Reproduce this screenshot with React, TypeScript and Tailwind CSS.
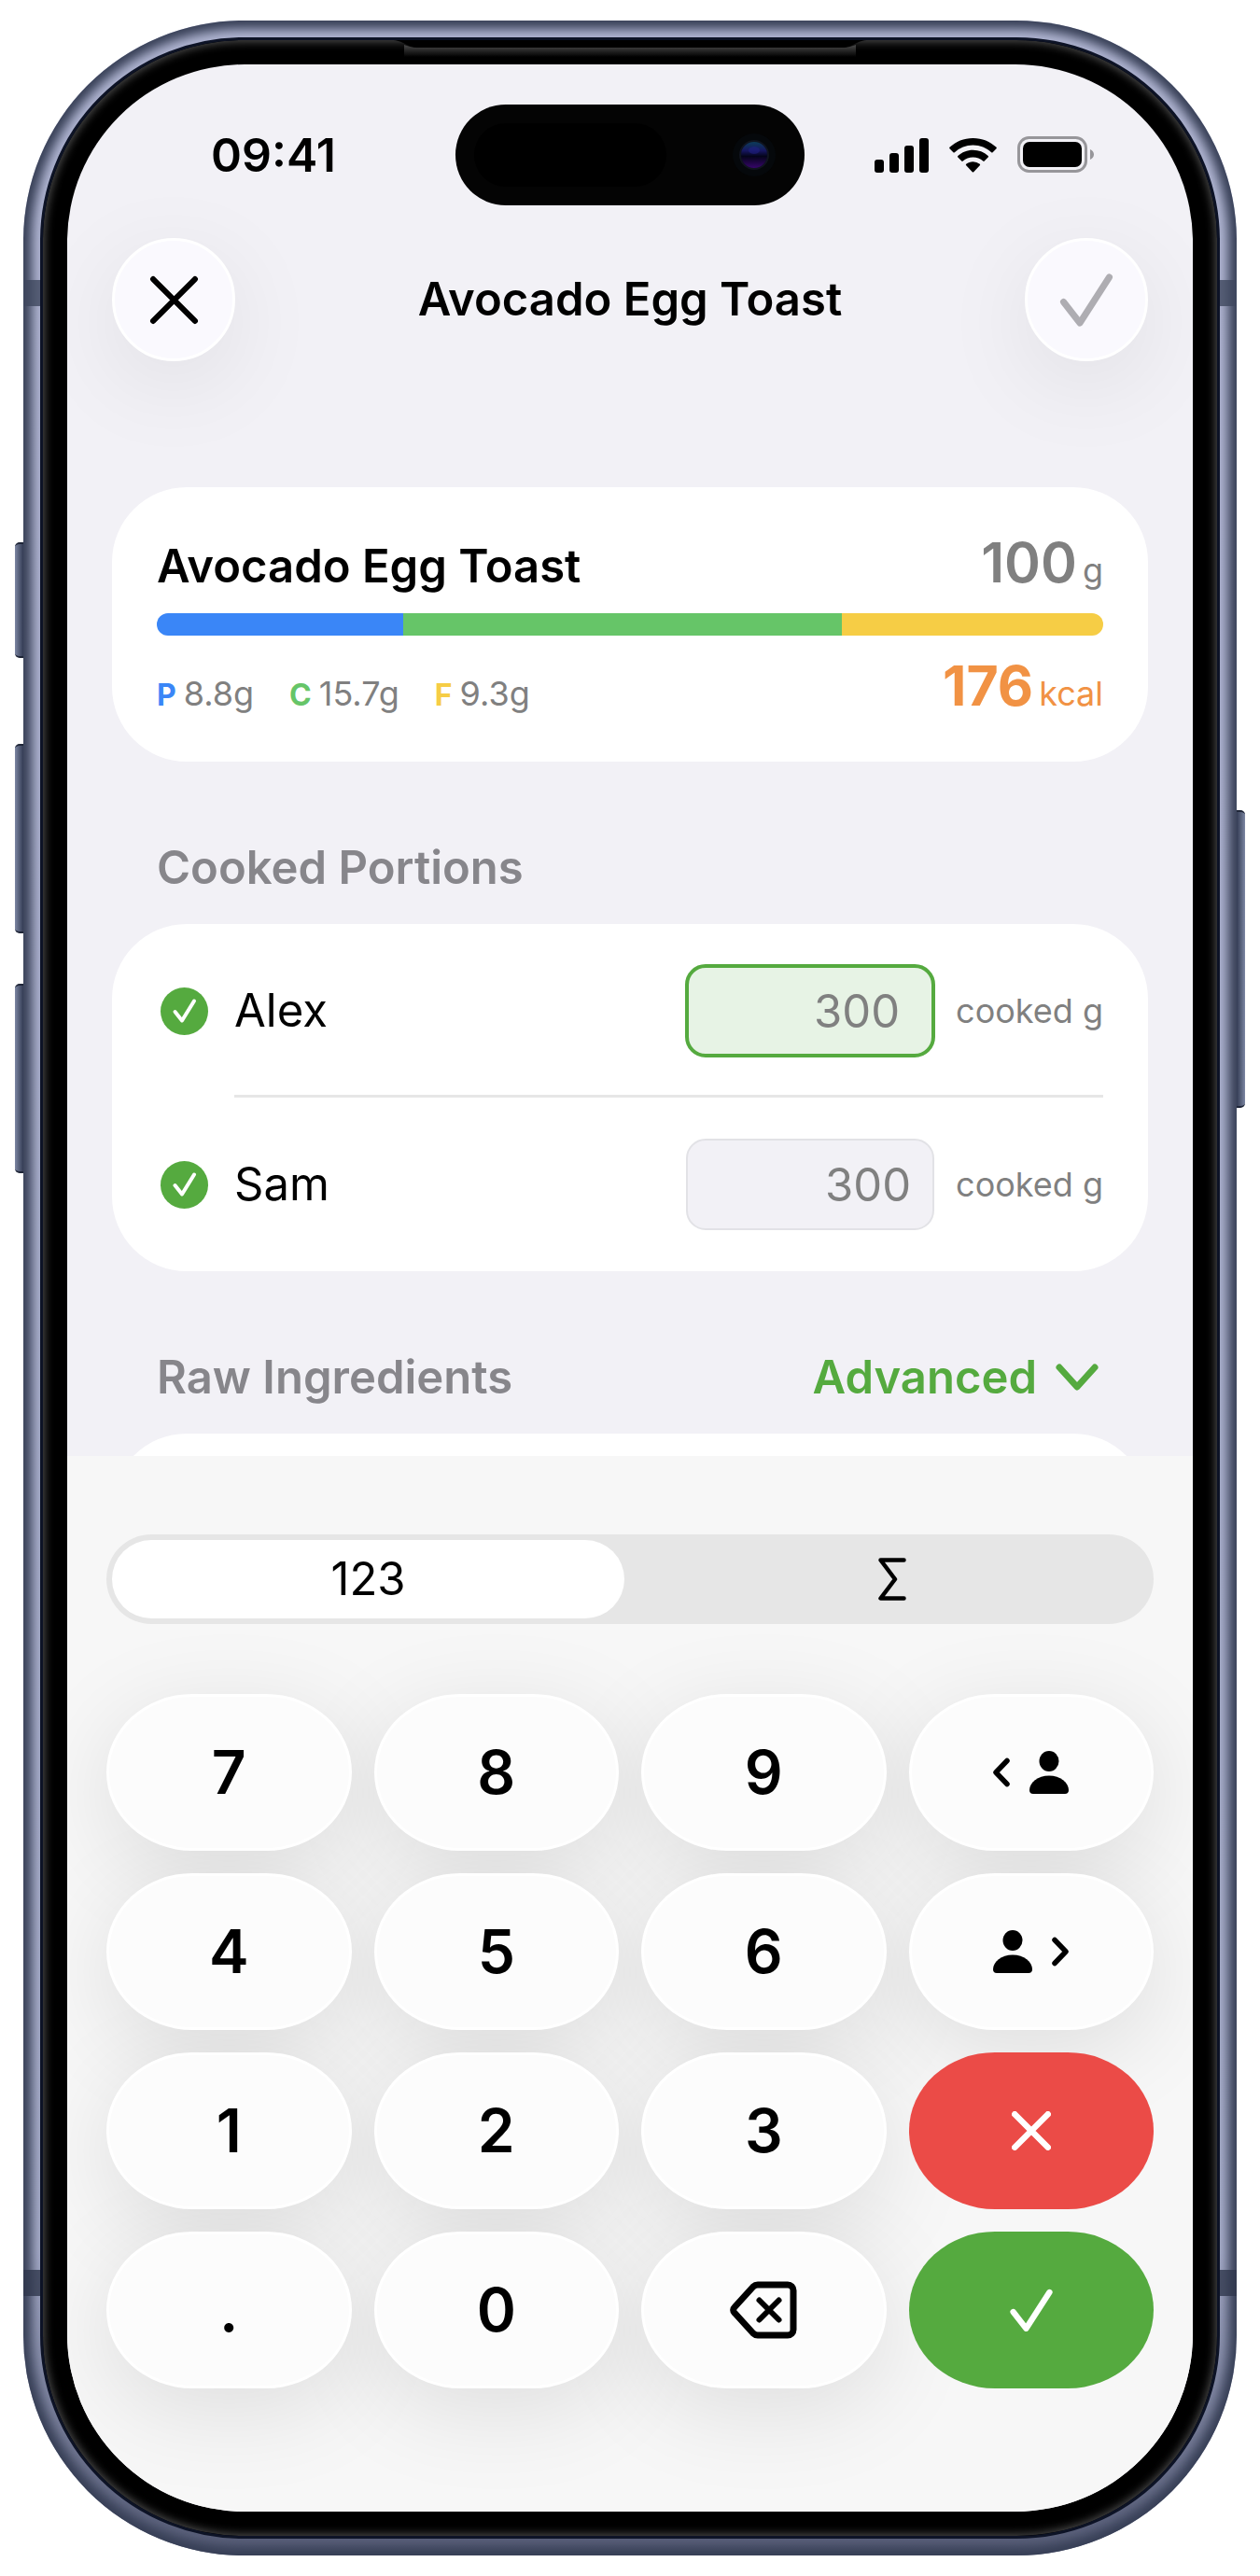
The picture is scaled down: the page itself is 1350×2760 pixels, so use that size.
import { useState, type ReactNode } from 'react';

// Types
interface Macro {
  letter: string;
  grams: string;
  share: number;
  text: string;
  bar: string;
}

interface Portion {
  name: string;
  grams: string;
  active: boolean;
}

const MACROS: Macro[] = [
  { letter: 'P', grams: '8.8g', share: 264, text: 'text-[#3a86f7]', bar: 'bg-[#3a86f7]' },
  { letter: 'C', grams: '15.7g', share: 470, text: 'text-[#66c568]', bar: 'bg-[#66c568]' },
  { letter: 'F', grams: '9.3g', share: 280, text: 'text-[#f6cd45]', bar: 'bg-[#f6cd45]' },
];

const PORTIONS: Portion[] = [
  { name: 'Alex', grams: '300', active: true },
  { name: 'Sam', grams: '300', active: false },
];

// Icons
const StatusIcons = () => (
  <div className="flex items-center gap-[22px] pr-[6px]">
    <svg width="58" height="38" viewBox="0 0 58 38">
      <rect x="0" y="24" width="10" height="14" rx="3" />
      <rect x="16" y="17" width="10" height="21" rx="3" />
      <rect x="32" y="9" width="10" height="29" rx="3" />
      <rect x="48" y="1" width="10" height="37" rx="3" />
    </svg>
    <svg width="51" height="38" viewBox="0 0 51 38">
      <path d="M25.5 1C15.8 1 7 4.700 .5 10.800a1 1 0 0 0 0 1.400l3.900 4a1 1 0 0 0 1.400 0A28.600 28.600 0 0 1 25.500 8.400c7.600 0 14.500 2.900 19.700 7.800a1 1 0 0 0 1.400 0l3.900-4a1 1 0 0 0 0-1.400C44 4.700 35.200 1 25.500 1Z" />
      <path d="M25.5 13.800c-6.200 0-11.900 2.400-16.200 6.300a1 1 0 0 0 0 1.500l4 4a1 1 0 0 0 1.400 0 16 16 0 0 1 21.600 0 1 1 0 0 0 1.400 0l4-4a1 1 0 0 0 0-1.500 24 24 0 0 0-16.200-6.300Z" />
      <path d="M25.5 26.200c-2.800 0-5.300 1-7.300 2.600a1 1 0 0 0 0 1.500l6.600 6.900a1 1 0 0 0 1.400 0l6.600-6.900a1 1 0 0 0 0-1.500 11.500 11.500 0 0 0-7.300-2.600Z" />
    </svg>
    <svg width="82" height="40" viewBox="0 0 82 40">
      <rect x="1.500" y="1.500" width="72" height="36" rx="11" fill="none" stroke="#97969a" strokeWidth="3" />
      <rect x="6" y="6" width="63" height="27" rx="7" />
      <path d="M78 14c2.500 1 4 3 4 5.500s-1.500 4.500-4 5.500Z" fill="#97969a" />
    </svg>
  </div>
);

const CrossIcon = ({ size, stroke }: { size: number; stroke: number }) => (
  <svg width={size} height={size} viewBox="0 0 52 52" fill="none" stroke="currentColor" strokeWidth={stroke} strokeLinecap="round">
    <path d="M4 4l44 44M48 4 4 48" />
  </svg>
);

const CheckIcon = ({ size, stroke }: { size: number; stroke: number }) => (
  <svg width={size} height={size} viewBox="0 0 58 58" fill="none" stroke="currentColor" strokeWidth={stroke} strokeLinecap="round" strokeLinejoin="round">
    <path d="M4.500 31.500 22 54 53.500 5" />
  </svg>
);

const PersonIcon = () => (
  <svg width="42" height="46" viewBox="0 0 42 46" fill="currentColor">
    <ellipse cx="21" cy="11" rx="10.500" ry="11" />
    <path d="M21 26.500C9 26.500 0 34 0 42c0 2.600 1.400 4 4 4h34c2.600 0 4-1.400 4-4 0-8-9-15.500-21-15.500Z" />
  </svg>
);

const ChevronIcon = ({ flip = false }: { flip?: boolean }) => (
  <svg width="18" height="32" viewBox="0 0 18 32" fill="none" stroke="currentColor" strokeWidth="5.500" strokeLinecap="round" strokeLinejoin="round">
    <path d={flip ? 'M3 3.500 15 16 3 28.500' : 'M15 3.500 3 16l12 12.500'} />
  </svg>
);

const BackspaceIcon = () => (
  <svg width="72" height="62" viewBox="0 0 72 62" fill="none" stroke="currentColor" strokeWidth="7" strokeLinecap="round" strokeLinejoin="round">
    <path d="M30 4h32a6 6 0 0 1 6 6v42a6 6 0 0 1-6 6H30a7 7 0 0 1-5-2L5 34a4 4 0 0 1 0-6L25 6a7 7 0 0 1 5-2Z" />
    <path d="m31.500 20.500 21 21M52.500 20.500l-21 21" strokeWidth="6" />
  </svg>
);

// Buttons
const GlassButton = ({ label, tone, children }: { label: string; tone: string; children: ReactNode }) => (
  <button
    aria-label={label}
    className={`flex size-[132px] items-center justify-center rounded-full border-[3px] border-white bg-[#faf9fe] shadow-[0_24px_100px_rgba(0,0,0,0.08)] ${tone}`}
  >
    {children}
  </button>
);

// The shadow sits on a layer of its own so that it never darkens the next key
const LIGHT_KEY =
  "border-[3px] border-white bg-[#fcfcfc] text-black before:absolute before:inset-0 before:-z-10 before:rounded-[84px] before:shadow-[0_22px_100px_4px_rgba(0,0,0,0.1)] before:content-['']";

const Key = ({ label, tone = LIGHT_KEY, children }: { label?: string; tone?: string; children: ReactNode }) => (
  <button
    aria-label={label}
    className={`relative flex h-[168px] items-center justify-center gap-[21px] rounded-[92px/84px] text-[64px] font-semibold ${tone}`}
  >
    {children}
  </button>
);

const SummaryCard = () => (
  <section className="rounded-[80px] bg-white px-12 py-[45px]">
    <div className="flex items-baseline justify-between">
      <h2 className="text-[49px] leading-[60px] font-semibold">Avocado Egg Toast</h2>
      <p className="flex items-baseline gap-[6px] text-[#808080]">
        <span className="text-[59px] leading-[72px] font-semibold">100</span>
        <span className="text-[36px] leading-[48px]">g</span>
      </p>
    </div>
    <div className="mt-[18px] flex h-6 overflow-hidden rounded-full">
      {MACROS.map((m) => (
        <div key={m.letter} className={m.bar} style={{ flexGrow: m.share }} />
      ))}
    </div>
    <div className="mt-[18px] flex items-baseline justify-between">
      <ul className="flex items-baseline gap-[38px] text-[36px] leading-[48px]">
        {MACROS.map((m) => (
          <li key={m.letter} className="flex items-baseline gap-2">
            <span className={`text-[32px] font-bold ${m.text}`}>{m.letter}</span>
            <span className="text-[#808080]">{m.grams}</span>
          </li>
        ))}
      </ul>
      <p className="flex items-baseline gap-[6px] text-[#f19244]">
        <span className="text-[59px] leading-[72px] font-bold">176</span>
        <span className="text-[36px] leading-[48px]">kcal</span>
      </p>
    </div>
  </section>
);

const PortionRow = ({ portion }: { portion: Portion }) => {
  const [checked, setChecked] = useState(true);
  const [grams, setGrams] = useState(portion.grams);
  const id = `portion-${portion.name}`;

  return (
    <div className="flex items-center justify-between">
      <label className="flex items-center gap-[26px] text-[49px] leading-[60px]">
        <span className="relative size-[57px]">
          <input
            type="checkbox"
            checked={checked}
            onChange={(e) => setChecked(e.target.checked)}
            className="block size-full appearance-none rounded-full"
          />
          <svg viewBox="0 0 57 57" className="pointer-events-none absolute inset-0">
            <circle cx="29.500" cy="28.500" r="25.500" fill={checked ? '#55aa3f' : '#d1d1d6'} />
            <path d="m19.500 29 7.500 9.500 13-21" fill="none" stroke="#fff" strokeWidth="4" strokeLinecap="round" strokeLinejoin="round" />
          </svg>
        </span>
        {portion.name}
      </label>
      <div className="flex items-center gap-6 text-[#808080]">
        <input
          id={id}
          inputMode="decimal"
          value={grams}
          onChange={(e) => setGrams(e.target.value)}
          className={
            portion.active
              ? 'h-24 w-[264px] rounded-[20px] bg-[#e7f3e5] pr-9 text-right text-[49px] outline-4 -outline-offset-2 outline-[#55aa3f]'
              : 'h-24 w-[264px] rounded-[20px] bg-[#f2f1f6] pr-6 text-right text-[49px] outline-2 -outline-offset-1 outline-[#e2e2e6]'
          }
        />
        <label htmlFor={id} className="text-[36px] leading-[48px]">
          cooked g
        </label>
      </div>
    </div>
  );
};

const Keypad = () => {
  const [mode, setMode] = useState<'digits' | 'sum'>('digits');
  const on = 'flex h-[84px] flex-1 items-center justify-center rounded-full bg-white';
  const off = 'flex h-[84px] flex-1 items-center justify-center rounded-full';

  return (
    <section className="relative isolate bg-[#f7f7f7] px-[42px] pt-[84px] pb-[132px]">
      <div className="flex gap-3 rounded-full bg-[#e6e6e6] p-[6px] text-[49px]">
        <button onClick={() => setMode('digits')} className={mode === 'digits' ? on : off}>
          123
        </button>
        <button aria-label="Sum" onClick={() => setMode('sum')} className={mode === 'sum' ? on : off}>
          <svg width="30" height="46" viewBox="0 0 30 46" fill="none" stroke="currentColor" strokeWidth="4.500" strokeLinecap="round" strokeLinejoin="round">
            <path d="M27.500 2.500h-25L18 23 2.500 43.500h25" />
          </svg>
        </button>
      </div>
      <div className="mt-[75px] grid grid-cols-4 gap-6">
        <Key>7</Key>
        <Key>8</Key>
        <Key>9</Key>
        <Key label="Previous person">
          <ChevronIcon />
          <PersonIcon />
        </Key>
        <Key>4</Key>
        <Key>5</Key>
        <Key>6</Key>
        <Key label="Next person">
          <PersonIcon />
          <ChevronIcon flip />
        </Key>
        <Key>1</Key>
        <Key>2</Key>
        <Key>3</Key>
        <Key label="Cancel" tone="bg-[#eb4b47] text-white">
          <CrossIcon size={42} stroke={8} />
        </Key>
        <Key>.</Key>
        <Key>0</Key>
        <Key label="Delete">
          <BackspaceIcon />
        </Key>
        <Key label="Confirm" tone="bg-[#55aa3f] text-white">
          <CheckIcon size={46} stroke={8} />
        </Key>
      </div>
    </section>
  );
};

// Phone hardware around the screen
const SideButton = ({ place }: { place: string }) => (
  <span className={`absolute w-[9px] border-y-2 border-[#1f2638] from-[#7d87a3] to-[#343c54] ${place}`} />
);

const Phone = ({ children }: { children: ReactNode }) => (
  <div className="relative">
    <SideButton place="top-[559px] -left-[9px] h-[124px] rounded-l-[5px] bg-linear-to-r" />
    <SideButton place="top-[775px] -left-[9px] h-[203px] rounded-l-[5px] bg-linear-to-r" />
    <SideButton place="top-[1032px] -left-[9px] h-[203px] rounded-l-[5px] bg-linear-to-r" />
    <SideButton place="top-[846px] -right-[9px] h-[319px] rounded-r-[5px] bg-linear-to-l" />
    <div className="relative overflow-hidden rounded-[236px] bg-linear-to-b from-[#b0b5d2] via-[#a6acc9] via-88% to-[#555b75] p-[18px] shadow-[inset_0_0_12px_9px_#373f56]">
      <span className="absolute inset-x-0 top-[278px] h-7 bg-[#3f475e]/80" />
      <span className="absolute inset-x-0 bottom-[278px] h-7 bg-[#30374c]/80" />
      <div className="relative rounded-[218px] border-[3px] border-[#0d1326] bg-black p-[26px] shadow-[inset_0_0_10px_2px_#4c4c4c]">
        {/* Earpiece */}
        <svg viewBox="0 0 512 20" className="absolute top-0 left-1/2 w-[512px] -translate-x-1/2">
          <defs>
            <linearGradient id="lip" x1="0" y1="6" x2="0" y2="18" gradientUnits="userSpaceOnUse">
              <stop offset="0" stopColor="#444" />
              <stop offset="1" stopColor="#000" />
            </linearGradient>
          </defs>
          <path d="M14 5c6 2 8 3 16 3h452c8 0 10-1 16-3v15H14Z" fill="url(#lip)" />
          <path d="M0 0c14 0 16 8 30 8h452c14 0 16-8 30-8Z" fill="#000" />
        </svg>
        <div className="relative overflow-hidden rounded-[190px] bg-[#f2f1f6]">{children}</div>
      </div>
    </div>
  </div>
);

const App = () => (
  <div className="min-h-screen bg-white px-[25px] py-[22px] font-['Inter',sans-serif] text-black">
    <Phone>
      <div className="flex items-center px-[26px] pt-[43px]">
        <time className="flex-1 text-center text-[50px] leading-[60px] font-semibold">09:41</time>
        <div className="flex h-[108px] w-[374px] items-center justify-between rounded-full bg-[#040404] pr-[31px] pl-5">
          <span className="h-[68px] w-[206px] rounded-full bg-black" />
          <svg width="46" height="46" viewBox="0 0 46 46">
            <defs>
              <linearGradient id="lens" x1="0" y1="0" x2="0" y2="1">
                <stop offset="0" stopColor="#0c4058" />
                <stop offset=".35" stopColor="#16165f" />
                <stop offset=".55" stopColor="#04041a" />
                <stop offset="1" stopColor="#3b0670" />
              </linearGradient>
            </defs>
            <circle cx="23" cy="23" r="23" fill="#05080b" />
            <circle cx="23" cy="23" r="15" fill="url(#lens)" stroke="#10141f" strokeWidth="2" />
            <ellipse cx="23" cy="18" rx="6" ry="4" fill="#22228a" opacity=".5" />
          </svg>
        </div>
        <div className="flex flex-1 justify-center">
          <StatusIcons />
        </div>
      </div>

      <header className="mt-[35px] flex items-center justify-between px-12">
        <GlassButton label="Close" tone="text-black">
          <CrossIcon size={53} stroke={6} />
        </GlassButton>
        <h1 className="text-[49px] leading-[60px] font-semibold">Avocado Egg Toast</h1>
        <GlassButton label="Save" tone="text-[#aeadb2]">
          <CheckIcon size={58} stroke={7} />
        </GlassButton>
      </header>

      <main className="mt-[135px] px-12">
        <SummaryCard />

        <h2 className="mt-[84px] px-12 text-[49px] leading-[60px] font-semibold text-[#87868b]">Cooked Portions</h2>
        <section className="mt-[30px] rounded-[80px] bg-white px-12 py-[45px]">
          <PortionRow portion={PORTIONS[0]} />
          <hr className="mt-[42px] mb-[45px] ml-[83px] border-t-[3px] border-[#e6e6e6]" />
          <PortionRow portion={PORTIONS[1]} />
        </section>

        <div className="mt-[84px] flex items-center justify-between px-12 text-[49px] leading-[60px] font-semibold">
          <h2 className="text-[#87868b]">Raw Ingredients</h2>
          <button className="flex items-center gap-5 pr-[5px] text-[#55aa3f]">
            Advanced
            <svg width="46" height="30" viewBox="0 0 46 30" fill="none" stroke="currentColor" strokeWidth="7" strokeLinecap="round" strokeLinejoin="round">
              <path d="m4 4 19 21L42 4" />
            </svg>
          </button>
        </div>
        {/* Top edge of the ingredient list, hidden below by the keypad */}
        <div className="mt-[30px] h-6 overflow-hidden">
          <div className="h-[160px] rounded-[80px] bg-white" />
        </div>
      </main>

      <Keypad />
    </Phone>
  </div>
);

export default App;
